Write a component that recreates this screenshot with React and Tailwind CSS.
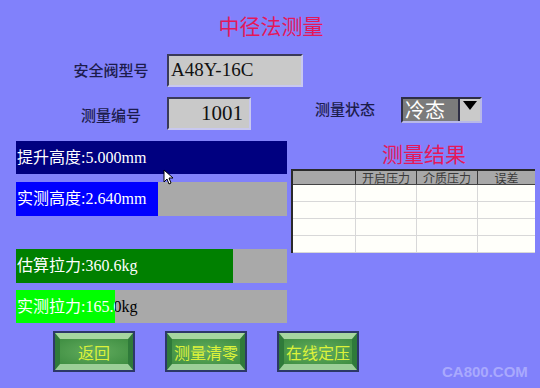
import React from 'react';

const cjk = '"Noto Sans CJK SC", "Noto Sans", sans-serif';
const serif = '"Liberation Serif", "Noto Sans CJK SC", serif';

const bars = [
  { label: '提升高度:5.000mm', fill: 'bg-[#000080]', width: 271, h: 'h-[33px]' },
  { label: '实测高度:2.640mm', fill: 'bg-[#0000ff]', width: 142, h: 'h-[34px] mt-[8px]' },
  { label: '估算拉力:360.6kg', fill: 'bg-[#008000]', width: 217, h: 'h-[34px] mt-[33px]' },
  { label: '实测拉力:165.0kg', fill: 'bg-[#00ff00]', width: 99, h: 'h-[33px] mt-[7px]' },
];

const Bar = ({ bar }) => (
  <div className={`relative w-[271px] bg-[#a9a9a9] ${bar.h}`}>
    <div className="flex h-full items-center pl-[1px] text-[16px] text-black" style={{ fontFamily: serif }}>
      {bar.label}
    </div>
    <div className={`absolute inset-y-0 left-0 overflow-hidden ${bar.fill}`} style={{ width: bar.width }}>
      <div className="flex h-full w-[271px] items-center pl-[1px] text-[16px] text-white" style={{ fontFamily: serif }}>
        {bar.label}
      </div>
    </div>
  </div>
);

const GreenButton = ({ children }) => (
  <div className="h-[41px] w-[82px] border-2 border-[#2c3868] bg-[#2c3868]">
    <div className="flex h-full w-full items-center justify-center border-x-[5px] border-t-[6px] border-b-[6px] border-x-[#2f7a3a] border-t-[#a6d6a0] border-b-[#9ccf98] bg-[radial-gradient(ellipse_at_center,#62ac5e_0%,#3f8e42_100%)] text-[16px] text-[#dcf23a]" style={{ fontFamily: cjk }}>
      {children}
    </div>
  </div>
);

export default function App() {
  const rows = [0, 1, 2, 3];
  const headers = ['', '开启压力', '介质压力', '误差'];

  return (
    <div className="relative h-[388px] w-[540px] overflow-hidden bg-[#8181fb]" style={{ fontFamily: cjk }}>
      {/* title */}
      <div className="h-[54px] pt-[13px] pl-[2px] text-center text-[21px] leading-[24px] text-[#e4185a]">
        中径法测量
      </div>

      {/* model row */}
      <div className="flex h-[33px] items-center">
        <div className="ml-[55px] w-[112px] text-center text-[15px] font-medium text-[#1c1c4c]">安全阀型号</div>
        <div className="flex h-[33px] w-[136px] items-center border-2 border-t-[#3a3a58] border-l-[#3a3a58] border-b-[#c8c8f0] border-r-[#c8c8f0] bg-[#c9c9c9] pl-[2px] text-[19px] text-[#111]" style={{ fontFamily: serif }}>
          A48Y-16C
        </div>
      </div>

      {/* number + state row */}
      <div className="mt-[10px] flex h-[32px] items-start">
        <div className="ml-[55px] mt-[7px] w-[112px] text-center text-[15px] font-medium text-[#1c1c4c]">测量编号</div>
        <div className="flex h-[33px] w-[84px] items-center justify-end border-2 border-t-[#3a3a58] border-l-[#3a3a58] border-b-[#c8c8f0] border-r-[#c8c8f0] bg-[#c9c9c9] pr-[6px] text-[21px] text-[#111]" style={{ fontFamily: serif }}>
          1001
        </div>
        <div className="ml-[64px] mt-[1px] text-[15px] font-medium text-[#1c1c4c]">测量状态</div>
        <div className="ml-[26px] flex h-[26px] w-[81px] border-2 border-t-[#2e2e44] border-l-[#2e2e44] border-b-[#b8b8e8] border-r-[#b8b8e8] bg-[#7b7b7b]">
          <div className="flex flex-1 items-center pl-[2px] text-[20px] leading-none text-white">冷态</div>
          <div className="flex w-[22px] items-start justify-center border-l-2 border-[#2e2e44] bg-[#cacaca] pt-[2px]">
            <svg width="14" height="9" viewBox="0 0 14 9">
              <polygon points="0,0 14,0 7,9" fill="#000" />
            </svg>
          </div>
        </div>
      </div>

      {/* bars + results */}
      <div className="mt-[12px] flex">
        <div className="ml-[16px] flex w-[271px] flex-col">
          {bars.map((b) => (
            <Bar key={b.label} bar={b} />
          ))}
        </div>

        <div className="ml-[4px] w-[244px]">
          <div className="pl-[22px] text-center text-[21px] leading-[24px] text-[#e4185a]">测量结果</div>
          <div className="mt-[4px] border-t-2 border-l-2 border-[#2a2a2a] bg-[#fffffa]">
            <div className="grid h-[14px] grid-cols-[62px_61px_61px_1fr] border-b border-[#444] bg-[#a8a8a8] text-[12px] leading-[13px] text-[#3a3a3a]">
              {headers.map((h, i) => (
                <div key={i} className={`text-center ${i > 0 ? 'border-l border-[#3a3a3a]' : ''}`}>
                  {h}
                </div>
              ))}
            </div>
            {rows.map((r) => (
              <div key={r} className="grid h-[17px] grid-cols-[62px_61px_61px_1fr] border-b border-[#d8d8d8]">
                {headers.map((h, i) => (
                  <div key={i} className={i > 0 ? 'border-l border-[#d8d8d8]' : ''} />
                ))}
              </div>
            ))}
          </div>
        </div>
      </div>

      {/* buttons */}
      <div className="ml-[53px] mt-[8px] flex gap-[30px]">
        <GreenButton>返回</GreenButton>
        <GreenButton>测量清零</GreenButton>
        <GreenButton>在线定压</GreenButton>
      </div>

      {/* cursor */}
      <svg className="absolute left-[163px] top-[169px]" width="10" height="16" viewBox="0 0 10 16">
        <path d="M1 1 L1 13 L4 10 L6 15 L8 14 L6 9 L10 9 Z" fill="#fff" stroke="#000" strokeWidth="1" />
      </svg>

      {/* watermark */}
      <div className="absolute left-[442px] top-[363px] text-[15px] font-semibold leading-[18px] text-[#a9a9fd]" style={{ fontFamily: '"Liberation Sans", sans-serif' }}>
        CA800.COM
      </div>
    </div>
  );
}
